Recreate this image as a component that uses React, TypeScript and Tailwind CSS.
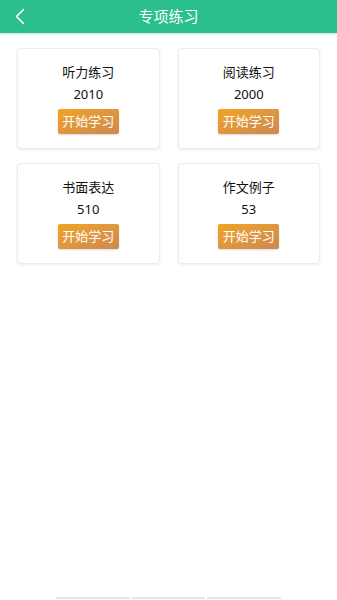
import React from "react";

const items = [
  { title: "听力练习", count: "2010" },
  { title: "阅读练习", count: "2000" },
  { title: "书面表达", count: "510" },
  { title: "作文例子", count: "53" },
];

export default function App() {
  return (
    <div
      className="relative flex min-h-[600px] w-[337px] flex-col bg-white"
      style={{ fontFamily: '"Noto Sans", "Noto Sans CJK SC", sans-serif' }}
    >
      <div className="relative flex h-[33px] items-center justify-center bg-[#2bbf8e] shadow-[0_1px_2px_rgba(43,191,142,0.35)]">
        <svg
          className="absolute left-[13px] top-[8px]"
          width="14"
          height="17"
          viewBox="0 0 14 17"
          fill="none"
        >
          <path d="M10.5 1.5 L3.5 8.5 L10.5 15.5" stroke="white" strokeWidth="1.6" strokeLinecap="round" strokeLinejoin="round" />
        </svg>
        <span className="text-[15px] leading-none text-white">专项练习</span>
      </div>
      <div className="grid grid-cols-2 gap-x-[18px] gap-y-[14px] px-[17px] pt-[15px]">
        {items.map((it) => (
          <div
            key={it.title}
            className="flex h-[101px] flex-col items-center rounded-[4px] border border-[#ececec] bg-white pt-[13px] shadow-[0_1px_3px_rgba(0,0,0,0.08)]"
          >
            <div className="text-[13px] leading-[20px] text-[#111]">{it.title}</div>
            <div className="mt-[2px] text-[13px] leading-[20px] text-[#111]">{it.count}</div>
            <button className="mt-[5px] flex h-[25px] w-[61px] items-center justify-center rounded-[2px] bg-gradient-to-br from-[#f2a31c] to-[#cc8950] text-[13px] leading-none text-white shadow-[0_1px_2px_rgba(0,0,0,0.15)]">
              开始学习
            </button>
          </div>
        ))}
      </div>
      <div className="mt-auto flex justify-center gap-[2px] pb-[1px]">
        <div className="h-[2px] w-[74px] bg-[#e6e6e6]" />
        <div className="h-[2px] w-[73px] bg-[#e6e6e6]" />
        <div className="h-[2px] w-[74px] bg-[#e6e6e6]" />
      </div>
    </div>
  );
}
